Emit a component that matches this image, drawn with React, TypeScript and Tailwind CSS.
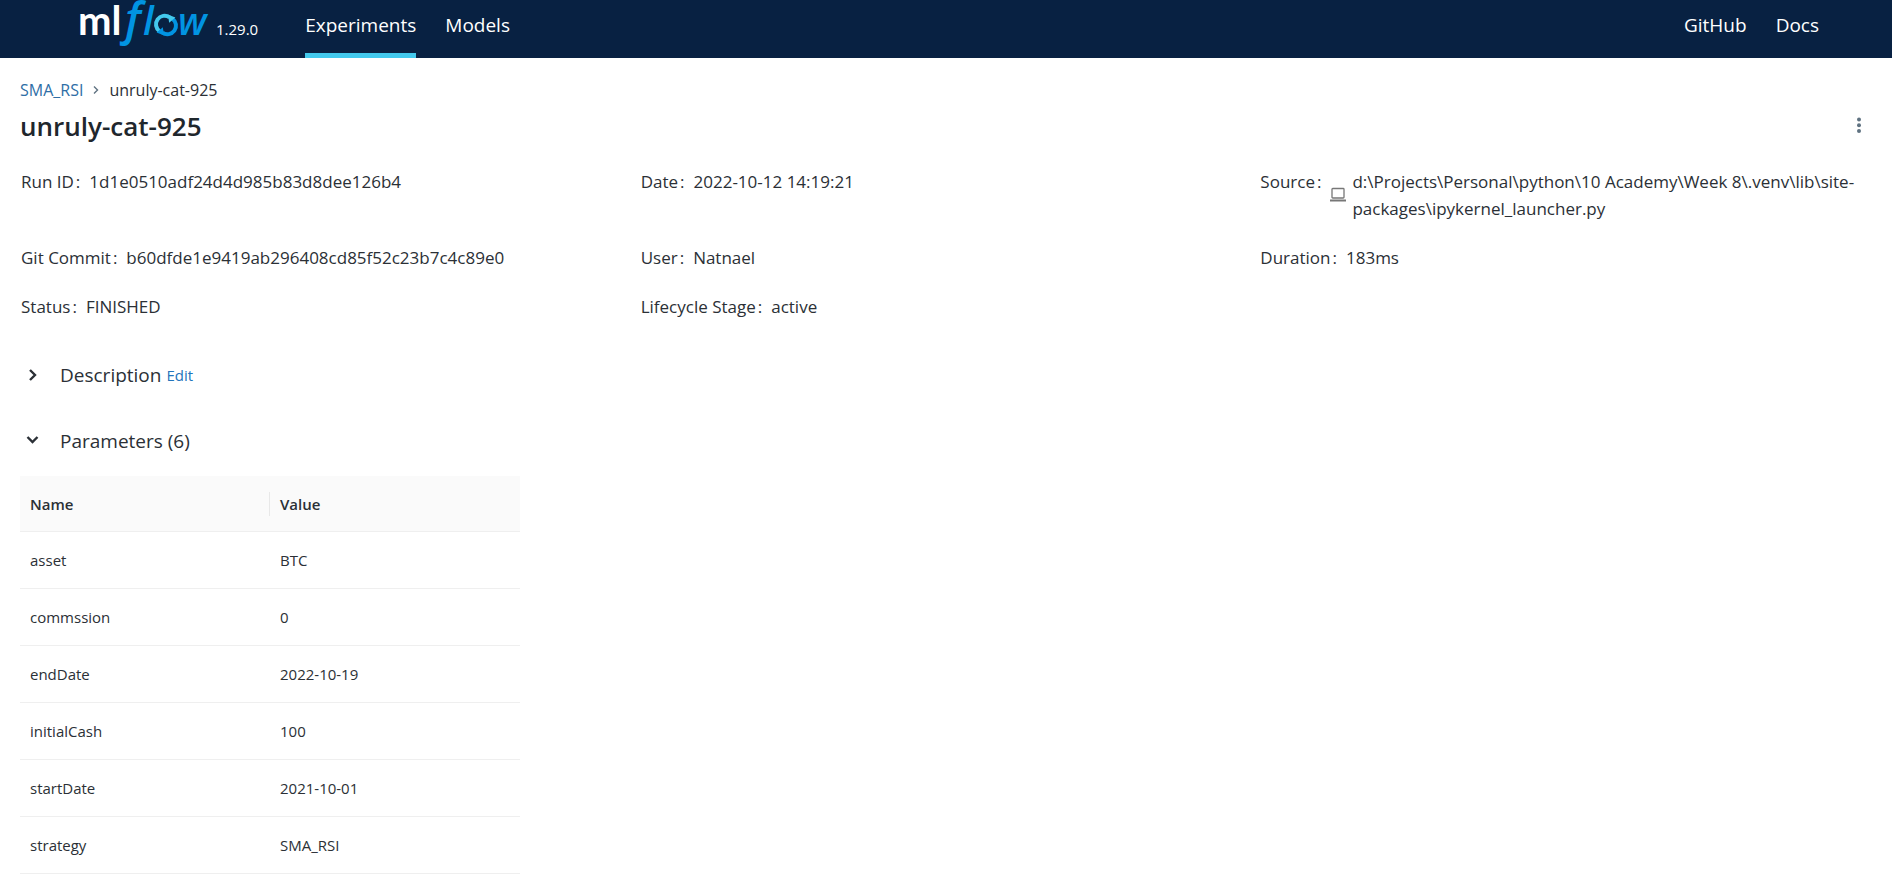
import { useState, type ReactNode } from 'react';

const parameters = [
  { name: 'asset', value: 'BTC' },
  { name: 'commssion', value: '0' },
  { name: 'endDate', value: '2022-10-19' },
  { name: 'initialCash', value: '100' },
  { name: 'startDate', value: '2021-10-01' },
  { name: 'strategy', value: 'SMA_RSI' },
];

function Logo() {
  return (
    <svg className="block h-[58px] w-[132px] overflow-visible" viewBox="0 0 132 58" role="img" aria-label="mlflow">
      <text x="-2" y="35" fontSize="40" fontWeight="700" fill="#ffffff" fontFamily="Lato, sans-serif">
        ml
      </text>
      <g fill="#0194e2" fontFamily="'Open Sans', sans-serif" fontStyle="italic">
        <text x="45" y="35" fontSize="46" fontWeight="600">f</text>
        <text x="63" y="35" fontSize="39" fontWeight="600">l</text>
        <text x="98" y="35" fontSize="38" fontWeight="600">w</text>
      </g>
      <g fill="none" strokeWidth="4">
        <path d="M79.5 31.2A8.3 8.3 0 0 1 89.5 17.4" stroke="#43c9ed" />
        <path d="M92.5 18.8A8.3 8.3 0 0 1 82.5 32.6" stroke="#0194e2" />
      </g>
      <path d="M87.8 14.4L95.4 17.6L89.2 22.8Z" fill="#43c9ed" />
      <path d="M84.2 35.6L76.6 32.4L82.8 27.2Z" fill="#0194e2" />
    </svg>
  );
}

function Chevron({ open }: { open: boolean }) {
  return (
    <svg className="h-4 w-6" viewBox="0 0 24 16" fill="none" stroke="currentColor" strokeWidth="2.4" aria-hidden="true">
      {open ? <path d="M7.5 4l5 5 5-5" /> : <path d="M10 3l5 5-5 5" />}
    </svg>
  );
}

function Laptop() {
  return (
    <svg className="h-4 w-4" viewBox="0 0 16 16" fill="none" stroke="#777777" aria-hidden="true">
      <rect x="2" y="1.5" width="12" height="9.5" rx="0.8" strokeWidth="1.3" />
      <path d="M0 13.5h16" strokeWidth="2" />
    </svg>
  );
}

function Meta({ label, children }: { label: string; children: ReactNode }) {
  return (
    <div className="flex">
      <dt className="mr-[9px] shrink-0">
        {label}
        <span className="ml-[2px]">:</span>
      </dt>
      <dd>{children}</dd>
    </div>
  );
}

export default function App() {
  const [descriptionOpen, setDescriptionOpen] = useState(false);
  const [parametersOpen, setParametersOpen] = useState(true);

  return (
    <div className="min-h-screen bg-white font-['Open_Sans',sans-serif] text-[#2b3036]">
      <header className="flex h-[58px] items-stretch bg-[#082142] pr-[73px] pl-20 text-white">
        <a href="#home">
          <Logo />
        </a>
        <span className="ml-1 pt-[19px] text-[15px] leading-5">1.29.0</span>
        <nav className="ml-[47px] flex flex-1 gap-[29px] text-[19px] leading-[50px]">
          <a href="#experiments" className="border-b-[5px] border-[#43c9ed]">
            Experiments
          </a>
          <a href="#models">Models</a>
          <a href="#github" className="ml-auto">
            GitHub
          </a>
          <a href="#docs">Docs</a>
        </nav>
      </header>

      <main className="px-5 pt-5">
        <nav aria-label="Breadcrumb" className="flex items-center gap-[9px] text-base leading-6">
          <a href="#sma-rsi" className="text-[#2e6ea6]">
            SMA_RSI
          </a>
          <svg className="h-3 w-2" viewBox="0 0 8 12" fill="none" stroke="#5f7281" strokeWidth="1.4" aria-hidden="true">
            <path d="M2 2.5l3.5 3.5L2 9.5" />
          </svg>
          <span>unruly-cat-925</span>
        </nav>

        <div className="flex items-center justify-between pt-[6px] pr-px">
          <h1 className="text-[26px] leading-9 font-semibold text-[#1f272d]">unruly-cat-925</h1>
          <button type="button" aria-label="More actions" className="flex h-8 w-6 items-center justify-center">
            <svg className="h-5 w-1" viewBox="0 0 4 20" fill="#5f7281" aria-hidden="true">
              <circle cx="2" cy="3.5" r="2" />
              <circle cx="2" cy="9.3" r="2" />
              <circle cx="2" cy="15.1" r="2" />
            </svg>
          </button>
        </div>

        <dl className="-mr-2 grid grid-cols-3 gap-y-[22px] pt-6 pl-px text-[17px] leading-[27px]">
          <Meta label="Run ID">1d1e0510adf24d4d985b83d8dee126b4</Meta>
          <Meta label="Date">2022-10-12 14:19:21</Meta>
          <Meta label="Source">
            <span className="flex items-center gap-[6px]">
              <span className="shrink-0">
                <Laptop />
              </span>
              <span>
                d:\Projects\Personal\python\10 Academy\Week 8\.venv\lib\site-
                <wbr />
                packages\ipykernel_launcher.py
              </span>
            </span>
          </Meta>
          <Meta label="Git Commit">b60dfde1e9419ab296408cd85f52c23b7c4c89e0</Meta>
          <Meta label="User">Natnael</Meta>
          <Meta label="Duration">183ms</Meta>
          <Meta label="Status">FINISHED</Meta>
          <Meta label="Lifecycle Stage">active</Meta>
        </dl>

        <section className="flex items-center pt-10 text-[19px] leading-[30px]">
          <button
            type="button"
            aria-expanded={descriptionOpen}
            onClick={() => setDescriptionOpen(!descriptionOpen)}
            className="flex items-center gap-4"
          >
            <Chevron open={descriptionOpen} />
            Description
          </button>
          <button type="button" className="ml-[5px] text-[15px] text-[#2374bb]">
            Edit
          </button>
        </section>

        <section className="pt-9">
          <h2 className="text-[19px] leading-[30px]">
            <button
              type="button"
              aria-expanded={parametersOpen}
              onClick={() => setParametersOpen(!parametersOpen)}
              className="flex items-center gap-4"
            >
              <Chevron open={parametersOpen} />
              Parameters (6)
            </button>
          </h2>
          {parametersOpen && (
            <table className="mt-5 w-[500px] table-fixed border-separate border-spacing-0 text-left text-[15px] leading-6">
              <thead>
                <tr className="h-14 bg-[#fafafa]">
                  <th className="border-b border-[#efefef] pl-[10px] font-semibold">
                    <div className="border-r border-[#e8e8e8]">Name</div>
                  </th>
                  <th className="border-b border-[#efefef] px-[10px] font-semibold">Value</th>
                </tr>
              </thead>
              <tbody>
                {parameters.map((parameter) => (
                  <tr key={parameter.name} className="h-[57px]">
                    <td className="border-b border-[#efefef] px-[10px]">{parameter.name}</td>
                    <td className="border-b border-[#efefef] px-[10px]">{parameter.value}</td>
                  </tr>
                ))}
              </tbody>
            </table>
          )}
        </section>
      </main>
    </div>
  );
}
